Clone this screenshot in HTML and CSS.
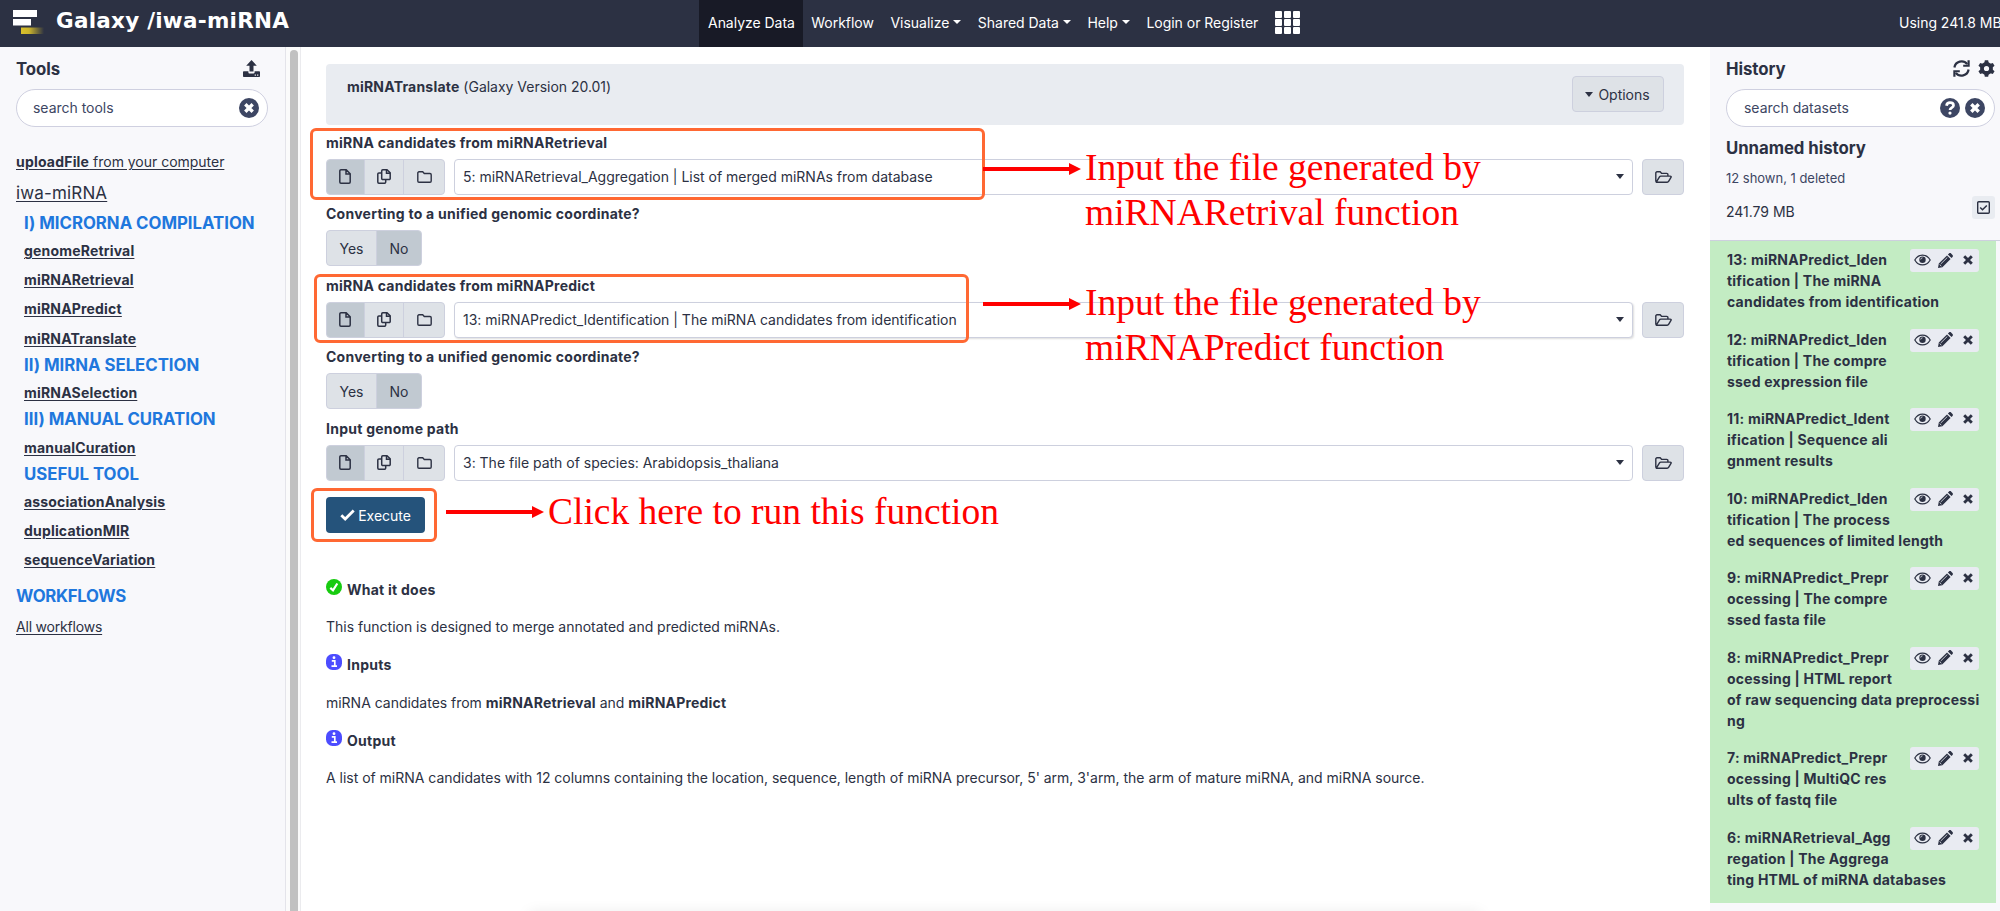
FILE: index.html
```html
<!DOCTYPE html>
<html lang="en">
<head>
<meta charset="utf-8">
<title>Galaxy / iwa-miRNA</title>
<link rel="stylesheet" href="styles.css">
</head>
<body>
<svg class="sprite" aria-hidden="true">
  <defs>
    <linearGradient id="gold" x1="0" x2="1"><stop offset="0" stop-color="#d9c02b"/><stop offset=".35" stop-color="#cbb42c"/><stop offset="1" stop-color="#2c3143"/></linearGradient>
    <symbol id="i-file" viewBox="0 0 12 15"><path d="M2 .8h5.2L11.2 4.800v8.200a1.200 1.200 0 0 1-1.200 1.200H2A1.200 1.200 0 0 1 .8 13V2A1.200 1.200 0 0 1 2 .8zM7 1v4h4" fill="none" stroke="currentColor" stroke-width="1.500"/></symbol>
    <symbol id="i-copy" viewBox="0 0 14 15"><path d="M5.800.8h4.200l3.200 3v5.700a1.100 1.100 0 0 1-1.100 1.100H5.800a1.100 1.100 0 0 1-1.100-1.100V1.900A1.100 1.100 0 0 1 5.800.8zM9.500 1v3.300h3.500M4.700 4H1.900A1.100 1.100 0 0 0 .8 5.100v8A1.100 1.100 0 0 0 1.900 14.200h5.700a1.100 1.100 0 0 0 1.100-1.100v-2.500" fill="none" stroke="currentColor" stroke-width="1.500"/></symbol>
    <symbol id="i-folder" viewBox="0 0 15 12"><path d="M2 .8h3.700l1.600 1.700H13a1.200 1.200 0 0 1 1.200 1.200V10a1.200 1.200 0 0 1-1.200 1.200H2A1.200 1.200 0 0 1 .8 10V2A1.200 1.200 0 0 1 2 .8z" fill="none" stroke="currentColor" stroke-width="1.400"/></symbol>
    <symbol id="i-open" viewBox="0 0 17 12"><path d="M1.200 10.600 .8 10V2A1.200 1.200 0 0 1 2 .8h3.200l1.500 1.600h5A1.200 1.200 0 0 1 12.900 3.600v1.500M1.300 11.200 4.500 5.900c.3-.5.8-.8 1.300-.8h9.300c.9 0 1.300.6.9 1.300l-2.400 4c-.3.500-.8.8-1.400.8z" fill="none" stroke="currentColor" stroke-width="1.400" stroke-linejoin="round"/></symbol>
    <symbol id="i-x" viewBox="0 0 12 12"><path d="M2.200 2.200 9.800 9.800M9.800 2.200 2.200 9.800" stroke="currentColor" stroke-width="2.900" fill="none"/></symbol>
    <symbol id="i-eye" viewBox="0 0 17 12"><path d="M.8 6C2.500 3 5.300 1.100 8.500 1.100S14.500 3 16.200 6C14.500 9 11.700 10.900 8.500 10.900S2.500 9 .8 6z" fill="none" stroke="currentColor" stroke-width="1.200"/><circle cx="8.500" cy="5.800" r="3.200" fill="currentColor"/><path d="M6.700 5.500a1.900 1.900 0 0 1 1.800-1.700" fill="none" stroke="#e9ebf2" stroke-width=".8"/></symbol>
    <symbol id="i-pencil" viewBox="0 0 15 15"><path d="M0 15 .8 10.600 9 2.400l3.600 3.600-8.200 8.200zM9.900 1.500 11 .5c.6-.6 1.500-.6 2.100 0L14.500 1.900c.6.6.6 1.500 0 2.100l-1 1.100z" fill="currentColor"/><path d="M2.700 11 9.300 4.500M1.700 11.600l1.700 1.700" stroke="#e9ebf2" stroke-width=".8"/></symbol>
    <symbol id="i-circle-x" viewBox="0 0 20 20"><circle cx="10" cy="10" r="10" fill="currentColor"/><path d="M6.300 6.300l7.400 7.400M13.700 6.300l-7.400 7.400" stroke="#fff" stroke-width="3.400"/></symbol>
    <symbol id="i-circle-q" viewBox="0 0 20 20"><circle cx="10" cy="10" r="10" fill="currentColor"/><path d="M6.500 7.700C6.800 5.700 8.200 4.700 10 4.700c2 0 3.500 1.100 3.500 2.800 0 2.200-3.500 2.200-3.500 4.500" fill="none" stroke="#fff" stroke-width="2.700"/><circle cx="10" cy="15.100" r="1.600" fill="#fff"/></symbol>
    <symbol id="i-upload" viewBox="0 0 17 17"><path d="M8.500 0l5.300 5.700h-3.300v5.800h-4V5.700H3.200zM.8 11.200h4.600v1.300c0 .5.400.9.900.9h4.400c.5 0 .9-.4.900-.9v-1.300h4.600c.5 0 .8.300.8.800v4.200c0 .5-.3.800-.8.800H.8c-.5 0-.8-.3-.8-.8V12c0-.5.300-.8.800-.8z" fill="currentColor"/><path d="M11.700 15.100h1.200M14.100 15.100h1.200" stroke="#f8f8fb" stroke-width="1.100"/></symbol>
    <symbol id="i-refresh" viewBox="0 0 17 17"><path d="M1.400 7.500A7.200 7.200 0 0 1 14.200 4.200M15.600 9.500A7.200 7.200 0 0 1 2.800 12.800" fill="none" stroke="currentColor" stroke-width="2.200"/><path d="M16.700.3v6.500h-6.500V4.800h4.300V.3zM.3 16.700v-6.500h6.500v2H2.500v4.500z" fill="currentColor"/></symbol>
    <symbol id="i-gear" viewBox="-8.500 -8.500 17 17"><circle r="4.500" fill="none" stroke="currentColor" stroke-width="3.800"/><g fill="currentColor"><path id="tooth" d="M-2.300-5-1.700-8.300h3.400L2.300-5z"/><use href="#tooth" transform="rotate(60)"/><use href="#tooth" transform="rotate(120)"/><use href="#tooth" transform="rotate(180)"/><use href="#tooth" transform="rotate(240)"/><use href="#tooth" transform="rotate(300)"/></g></symbol>
    <symbol id="i-check" viewBox="0 0 15 12"><path d="M1.300 6.200 5.200 10 13.700 1.500" fill="none" stroke="currentColor" stroke-width="2.800"/></symbol>
    <symbol id="i-box" viewBox="0 0 13 13"><rect x=".7" y=".7" width="11.600" height="11.600" rx="1" fill="none" stroke="currentColor" stroke-width="1.400"/><path d="M3.200 6.500 5.500 8.800l4.300-4.400" fill="none" stroke="currentColor" stroke-width="1.500"/></symbol>
    <symbol id="i-ok" viewBox="0 0 16 16"><circle cx="8" cy="8" r="8" fill="#17cb10"/><path d="M4.300 8.900 7 11.300 11.300 4.500" fill="none" stroke="#fff" stroke-width="2.200"/></symbol>
    <symbol id="i-info" viewBox="0 0 16 16"><rect width="16" height="16" rx="6.500" fill="#4c4cff"/><path d="M5.800 6.800h3v5M5.500 12.200h5.500" fill="none" stroke="#fff" stroke-width="1.700"/><circle cx="8" cy="3.700" r="1.400" fill="#fff"/></symbol>
    <symbol id="i-arrow" viewBox="0 0 98 12"><path d="M0 4h86V0l12 6-12 6V8H0z" fill="#f00"/></symbol>
  </defs>
</svg>

<header class="masthead">
  <div class="brand">
    <svg class="logo" width="32" height="26" viewBox="0 0 32 26"><path d="M0 0h24v7H0zM0 9h18v6.500H0z" fill="#fff"/><path d="M8 17.500h23v6.500H8z" fill="url(#gold)"/></svg>
    <span class="brand-name">Galaxy /iwa-miRNA</span>
  </div>
  <nav class="nav">
    <a class="active">Analyze Data</a><a>Workflow</a><a class="drop">Visualize</a><a class="drop">Shared Data</a><a class="drop">Help</a><a>Login or Register</a>
    <span class="grid"><i></i><i></i><i></i><i></i><i></i><i></i><i></i><i></i><i></i></span>
  </nav>
  <span class="quota">Using 241.8 MB</span>
</header>

<div class="columns">
  <aside class="tools">
    <div class="panel-head"><h2>Tools</h2><svg width="17" height="17"><use href="#i-upload"/></svg></div>
    <div class="search"><span>search tools</span><svg width="20" height="20"><use href="#i-circle-x"/></svg></div>
    <div class="tool-list">
      <a class="upload"><b>uploadFile</b> from your computer</a>
      <a class="section">iwa-miRNA</a>
      <h3>I) MICRORNA COMPILATION</h3>
      <a class="tool">genomeRetrival</a>
      <a class="tool">miRNARetrieval</a>
      <a class="tool">miRNAPredict</a>
      <a class="tool">miRNATranslate</a>
      <h3>II) MIRNA SELECTION</h3>
      <a class="tool">miRNASelection</a>
      <h3>III) MANUAL CURATION</h3>
      <a class="tool">manualCuration</a>
      <h3>USEFUL TOOL</h3>
      <a class="tool">associationAnalysis</a>
      <a class="tool">duplicationMIR</a>
      <a class="tool">sequenceVariation</a>
      <h3 class="workflows">WORKFLOWS</h3>
      <a class="all">All workflows</a>
    </div>
  </aside>
  <div class="scroll"><div class="thumb"></div></div>

  <main class="center">
    <div class="tool-head"><p><b>miRNATranslate</b> (Galaxy Version 20.01)</p><span class="btn options">Options</span></div>

    <section class="field"><label>miRNA candidates from miRNARetrieval</label>
      <div class="row">
        <div class="group"><span class="on"><svg width="12" height="15"><use href="#i-file"/></svg></span><span><svg width="14" height="15"><use href="#i-copy"/></svg></span><span><svg width="15" height="12"><use href="#i-folder"/></svg></span></div>
        <div class="select">5: miRNARetrieval_Aggregation | List of merged miRNAs from database</div>
        <span class="btn browse"><svg width="17" height="12"><use href="#i-open"/></svg></span>
      </div>
    </section>
    <section class="field"><label>Converting to a unified genomic coordinate?</label>
      <div class="toggle"><span>Yes</span><span class="on">No</span></div>
    </section>
    <section class="field"><label>miRNA candidates from miRNAPredict</label>
      <div class="row">
        <div class="group"><span class="on"><svg width="12" height="15"><use href="#i-file"/></svg></span><span><svg width="14" height="15"><use href="#i-copy"/></svg></span><span><svg width="15" height="12"><use href="#i-folder"/></svg></span></div>
        <div class="select raised">13: miRNAPredict_Identification | The miRNA candidates from identification</div>
        <span class="btn browse"><svg width="17" height="12"><use href="#i-open"/></svg></span>
      </div>
    </section>
    <section class="field"><label>Converting to a unified genomic coordinate?</label>
      <div class="toggle"><span>Yes</span><span class="on">No</span></div>
    </section>
    <section class="field"><label>Input genome path</label>
      <div class="row">
        <div class="group"><span class="on"><svg width="12" height="15"><use href="#i-file"/></svg></span><span><svg width="14" height="15"><use href="#i-copy"/></svg></span><span><svg width="15" height="12"><use href="#i-folder"/></svg></span></div>
        <div class="select">3: The file path of species: Arabidopsis_thaliana</div>
        <span class="btn browse"><svg width="17" height="12"><use href="#i-open"/></svg></span>
      </div>
    </section>
    <div class="execute"><svg width="15" height="12"><use href="#i-check"/></svg>Execute</div>

    <div class="help">
      <h4><svg width="16" height="16"><use href="#i-ok"/></svg>What it does</h4>
      <p>This function is designed to merge annotated and predicted miRNAs.</p>
      <h4><svg width="16" height="16"><use href="#i-info"/></svg>Inputs</h4>
      <p>miRNA candidates from <b>miRNARetrieval</b> and <b>miRNAPredict</b></p>
      <h4><svg width="16" height="16"><use href="#i-info"/></svg>Output</h4>
      <p>A list of miRNA candidates with 12 columns containing the location, sequence, length of miRNA precursor, 5' arm, 3'arm, the arm of mature miRNA, and miRNA source.</p>
    </div>
  </main>

  <aside class="history">
    <div class="history-top">
      <div class="panel-head"><h2>History</h2><div class="head-icons"><svg width="17" height="17"><use href="#i-refresh"/></svg><svg width="17" height="17"><use href="#i-gear"/></svg></div></div>
      <div class="search"><span>search datasets</span><svg width="20" height="20"><use href="#i-circle-q"/></svg><svg width="20" height="20"><use href="#i-circle-x"/></svg></div>
      <h2 class="name">Unnamed history</h2>
      <p class="counts">12 shown, 1 deleted</p>
      <div class="size"><span>241.79 MB</span><span class="check"><svg width="13" height="13"><use href="#i-box"/></svg></span></div>
    </div>
    <div class="datasets">
      <div class="item"><p>13: miRNAPredict_Iden<br>tification | The miRNA<br>candidates from identification</p><span class="acts"><svg width="17" height="12"><use href="#i-eye"/></svg><svg width="15" height="15"><use href="#i-pencil"/></svg><svg width="12" height="12"><use href="#i-x"/></svg></span></div>
      <div class="item"><p>12: miRNAPredict_Iden<br>tification | The compre<br>ssed expression file</p><span class="acts"><svg width="17" height="12"><use href="#i-eye"/></svg><svg width="15" height="15"><use href="#i-pencil"/></svg><svg width="12" height="12"><use href="#i-x"/></svg></span></div>
      <div class="item"><p>11: miRNAPredict_Ident<br>ification | Sequence ali<br>gnment results</p><span class="acts"><svg width="17" height="12"><use href="#i-eye"/></svg><svg width="15" height="15"><use href="#i-pencil"/></svg><svg width="12" height="12"><use href="#i-x"/></svg></span></div>
      <div class="item"><p>10: miRNAPredict_Iden<br>tification | The process<br>ed sequences of limited length</p><span class="acts"><svg width="17" height="12"><use href="#i-eye"/></svg><svg width="15" height="15"><use href="#i-pencil"/></svg><svg width="12" height="12"><use href="#i-x"/></svg></span></div>
      <div class="item"><p>9: miRNAPredict_Prepr<br>ocessing | The compre<br>ssed fasta file</p><span class="acts"><svg width="17" height="12"><use href="#i-eye"/></svg><svg width="15" height="15"><use href="#i-pencil"/></svg><svg width="12" height="12"><use href="#i-x"/></svg></span></div>
      <div class="item"><p>8: miRNAPredict_Prepr<br>ocessing | HTML report<br>of raw sequencing data preprocessi<br>ng</p><span class="acts"><svg width="17" height="12"><use href="#i-eye"/></svg><svg width="15" height="15"><use href="#i-pencil"/></svg><svg width="12" height="12"><use href="#i-x"/></svg></span></div>
      <div class="item"><p>7: miRNAPredict_Prepr<br>ocessing | MultiQC res<br>ults of fastq file</p><span class="acts"><svg width="17" height="12"><use href="#i-eye"/></svg><svg width="15" height="15"><use href="#i-pencil"/></svg><svg width="12" height="12"><use href="#i-x"/></svg></span></div>
      <div class="item"><p>6: miRNARetrieval_Agg<br>regation | The Aggrega<br>ting HTML of miRNA databases</p><span class="acts"><svg width="17" height="12"><use href="#i-eye"/></svg><svg width="15" height="15"><use href="#i-pencil"/></svg><svg width="12" height="12"><use href="#i-x"/></svg></span></div>
    </div>
  </aside>
</div>

<div class="mark mark-retrieval"></div>
<div class="mark mark-predict"></div>
<div class="mark mark-execute"></div>
<svg class="arrow arrow-retrieval" width="98" height="12"><use href="#i-arrow"/></svg>
<svg class="arrow arrow-predict" width="98" height="12"><use href="#i-arrow"/></svg>
<svg class="arrow arrow-execute" width="98" height="12"><use href="#i-arrow"/></svg>
<p class="note note-retrieval">Input the file generated by<br>miRNARetrival function</p>
<p class="note note-predict">Input the file generated by<br>miRNAPredict function</p>
<p class="note note-execute">Click here to run this function</p>
<div class="bottom-shade"></div>
</body>
</html>
```
FILE: styles.css
```css
* { box-sizing: border-box; margin: 0; padding: 0; }
body { width: 2000px; height: 911px; overflow: hidden; position: relative; background: #fff; color: #2c3143; font: 14px/21px Inter, "Liberation Sans", sans-serif; letter-spacing: -.02px; white-space: nowrap; }
svg { display: block; flex: none; }
.sprite { position: absolute; width: 0; height: 0; }
b { font-weight: 700; letter-spacing: .2px; }

.masthead { display: flex; justify-content: space-between; height: 47px; background: #2c3143; color: #fff; overflow: hidden; }
.brand { display: flex; width: 699px; padding: 10px 0 0 13px; gap: 11px; }
.brand-name { font: bold 21.500px/22px "DejaVu Sans", sans-serif; letter-spacing: .25px; }
.nav { display: flex; flex: 1; line-height: 45px; letter-spacing: -.03px; }
.nav a { padding: 0 8.300px; }
.nav .active { background: #181a26; width: 104px; padding-left: 9px; }
.drop::after { content: ""; display: inline-block; margin-left: 4px; vertical-align: 4px; border: 4px solid transparent; border-top-color: #fff; border-bottom: 0; }
.grid { display: grid; grid-template-columns: repeat(3, 7px); grid-auto-rows: 7px; gap: 1px 2px; margin: 11px 0 0 8px; }
.grid i { background: #fff; border-radius: 1px; }
.quota { width: 101px; line-height: 46px; }

.columns { display: flex; height: 864px; }
.tools { width: 286px; background: #f8f8fb; border-right: 1px solid #e4e4ea; padding: 11px 17px 0 16px; }
.panel-head { display: flex; justify-content: space-between; align-items: center; height: 21px; }
h2 { font-size: 16.800px; line-height: 21px; font-weight: 700; letter-spacing: -.06px; }
.panel-head h2 { padding-top: 1px; }
.tools .panel-head { padding-right: 8px; }
.search { display: flex; align-items: center; gap: 5px; height: 38px; margin-top: 10px; padding: 0 9px 0 17px; border: 1px solid #cfd0e0; border-radius: 19px; background: #fff; color: #3d4663; }
.search span { flex: 1; padding-bottom: 1px; }
.tools .search { padding: 0 8px 0 16px; }
.tool-list { display: flex; flex-direction: column; align-items: flex-start; padding-top: 24px; }
.tool-list a { text-decoration: underline; text-underline-offset: 2px; }
.tool-list .section { font-size: 17px; margin-top: 10.500px; letter-spacing: .15px; }
h3 { height: 25.300px; padding-left: 8px; color: #2077dd; font-size: 16.800px; line-height: 25.300px; font-weight: 700; }
.section + h3 { margin-top: 7.300px; }
.tool { height: 29.200px; line-height: 29.200px; padding-left: 8px; font-weight: 700; letter-spacing: .18px; }
h3.workflows { padding: 0; margin-top: 9px; letter-spacing: -.3px; }
.all { margin-top: 7.300px; letter-spacing: -.2px; }
.scroll { width: 15px; background: #fbfbfb; border-right: 1px solid #ebebee; padding: 3px 0 0 4px; }
.thumb { width: 8px; height: 880px; border-radius: 4px 4px 0 0; background: #c1c1c1; }

.center { width: 1409px; padding: 17px 26px 0 25px; }
.tool-head { display: flex; justify-content: space-between; height: 61px; padding: 12px 21px 0; border-radius: 4px; background: #e9ecf1; }
.btn { display: flex; align-items: center; justify-content: center; height: 36px; border: 1px solid #cdd0de; border-radius: 4px; background: #dee2e7; }
.options { width: 92px; margin-right: -.500px; gap: 5px; }
.options::before { content: ""; border: 4px solid transparent; border-top: 5px solid #2c3143; border-bottom: 0; }
.field { height: 71.500px; padding-top: 6.500px; }
.field label { display: block; height: 27.400px; font-weight: 700; letter-spacing: .25px; }
.row { display: flex; gap: 9px; }
.group, .toggle { display: flex; width: 119px; height: 36px; border: 1px solid #cdd0de; border-radius: 4px; background: #dee2e7; overflow: hidden; }
.group span, .toggle span { display: flex; flex: 1; align-items: center; justify-content: center; border-left: 1px solid #cdd0de; }
.group span:first-child { flex: 0 0 37px; padding-right: 1px; border-left: 0; }
.group span:last-child { flex: 0 0 41px; }
.toggle span:first-child { flex: 0 0 49px; border-left: 0; }
.group .on, .toggle .on { background: #c1c9d1; }
.toggle { width: 96px; }
.select { display: flex; align-items: center; flex: 1; padding: 0 8px; border: 1px solid #cdd0de; border-radius: 4px; background: #fff; letter-spacing: -.01px; }
.select::after { content: ""; margin-left: auto; border: 4.500px solid transparent; border-top: 5px solid #2c3143; border-bottom: 0; }
.raised { box-shadow: 1px 1px 2px #0002; }
.browse { width: 42px; }
.execute { display: flex; align-items: center; justify-content: center; gap: 3px; width: 99px; height: 36px; margin-top: 14.500px; border-radius: 4px; background: #25537b; color: #fff; }
.help { padding-top: 43.500px; }
h4, .help p { height: 37.750px; line-height: 25px; font-size: 14px; }
h4 { display: flex; gap: 5px; font-weight: 700; letter-spacing: .25px; }
h4 svg { margin-top: 2px; }

.history { flex: 1; background: #f8f8fb; }
.history-top { height: 194px; padding: 11px 5px 0 16px; border-bottom: 1px solid #cdd0de; }
.head-icons { display: flex; gap: 8px; }
.name { margin-top: 11px; }
.counts { margin-top: 8.500px; font-size: 13px; color: #3d4663; }
.size { display: flex; justify-content: space-between; margin-top: 12px; }
.check { display: flex; align-items: center; justify-content: center; width: 23px; height: 23px; margin-top: -5px; border-radius: 3px; background: #e9ecf1; }
.datasets { width: 286px; height: 662px; padding: 8px 17px 0; background: #c3ecc3; }
.item { display: flex; justify-content: space-between; margin-bottom: 16.500px; font-weight: 700; letter-spacing: .22px; }
.item p { width: 183px; }
.acts { display: flex; align-items: center; gap: 7px; width: 69px; height: 23px; padding: 0 0 1px 4px; border-radius: 3px; background: #e9ebf2; }
.acts svg:last-child { margin-left: 2px; }

.mark { position: absolute; border: 3px solid #ff6833; border-radius: 6px; }
.mark-retrieval { left: 310px; top: 128px; width: 675px; height: 72px; }
.mark-predict { left: 314px; top: 274px; width: 655px; height: 69px; }
.mark-execute { left: 311px; top: 488px; width: 126px; height: 54px; }
.arrow { position: absolute; left: 983px; }
.arrow-retrieval { top: 163px; }
.arrow-predict { top: 298px; }
.arrow-execute { left: 446px; top: 506px; }
.note { position: absolute; left: 1085px; color: #f00; font: 37.500px/45px "Liberation Serif", serif; letter-spacing: 0; }
.note-retrieval { top: 145px; }
.note-predict { top: 280px; }
.note-execute { left: 548px; top: 489px; }
.bottom-shade { position: absolute; left: 530px; top: 915px; width: 950px; height: 10px; box-shadow: 0 0 16px #0002; }
```
